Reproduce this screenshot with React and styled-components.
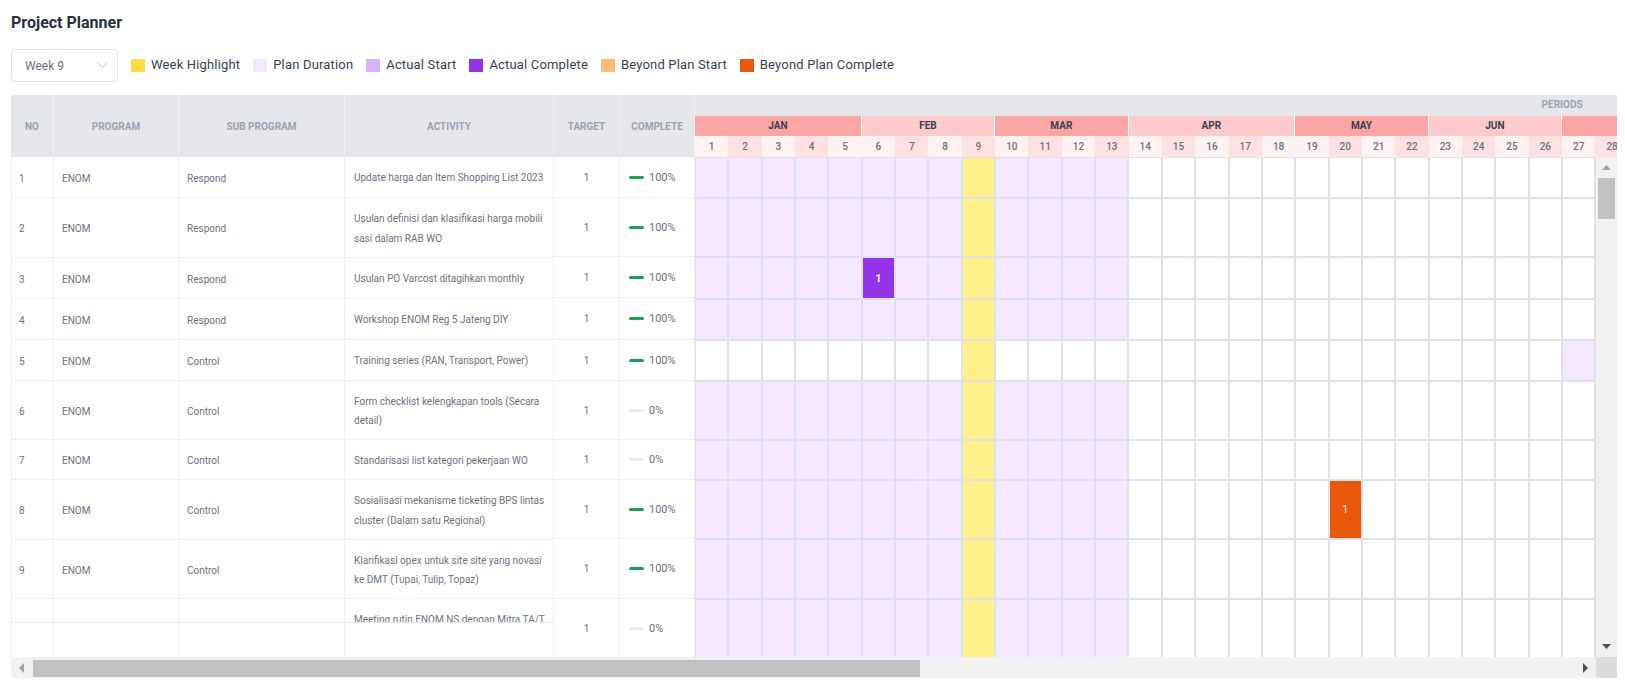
import React from "react";
import styled, { createGlobalStyle } from "styled-components";

const Global = createGlobalStyle`
  html, body { margin: 0; padding: 0; background: #fff; }
  body { font-family: Roboto, "Liberation Sans", sans-serif; overflow: hidden; }
`;

const COL = 33.35;
const LEFT_HEIGHTS = [41, 60, 41, 41, 41, 59, 40, 60, 59];
const METRIC_HEIGHTS = [41, 59, 41, 42, 41, 59, 40, 59, 60, 59];
const GRID_HEIGHTS = [41, 59, 42, 41, 41, 59, 40, 59, 60, 59];
const WIDTHS = { no: 43, program: 125, sub: 166, activity: 209, target: 66, complete: 75 };

const ROWS = [
  { no: 1, sub: "Respond", activity: "Update harga dan Item Shopping List 2023", done: 100 },
  { no: 2, sub: "Respond", activity: "Usulan definisi dan klasifikasi harga mobili\nsasi dalam RAB WO", done: 100 },
  { no: 3, sub: "Respond", activity: "Usulan PO Varcost ditagihkan monthly", done: 100, block: { col: 6, kind: "complete" } },
  { no: 4, sub: "Respond", activity: "Workshop ENOM Reg 5 Jateng DIY", done: 100 },
  { no: 5, sub: "Control", activity: "Training series (RAN, Transport, Power)", done: 100, plan: [27] },
  { no: 6, sub: "Control", activity: "Form checklist kelengkapan tools (Secara\ndetail)", done: 0 },
  { no: 7, sub: "Control", activity: "Standarisasi list kategori pekerjaan WO", done: 0 },
  { no: 8, sub: "Control", activity: "Sosialisasi mekanisme ticketing BPS lintas\ncluster (Dalam satu Regional)", done: 100, block: { col: 20, kind: "beyond" } },
  { no: 9, sub: "Control", activity: "Klarifikasi opex untuk site site yang novasi\nke DMT (Tupai, Tulip, Topaz)", done: 100 },
  { no: 10, sub: "", activity: "Meeting rutin ENOM NS dengan Mitra TA/T", done: 0 },
];

const MONTHS = [
  ["JAN", 5], ["FEB", 4], ["MAR", 4], ["APR", 5], ["MAY", 4], ["JUN", 4],
  ["JUL", 5], ["AUG", 4], ["SEP", 4], ["OCT", 5], ["NOV", 4], ["DEC", 4],
];

const LEGEND = [
  ["#fddc45", "Week Highlight"],
  ["#f3e8ff", "Plan Duration"],
  ["#d8b4fe", "Actual Start"],
  ["#9333ea", "Actual Complete"],
  ["#fdba74", "Beyond Plan Start"],
  ["#ea580c", "Beyond Plan Complete"],
];

const Page = styled.div`
  width: 1606px;
  padding-left: 11px;
`;
const Title = styled.h1`
  margin: 0;
  padding-top: 13px;
  height: 49px;
  box-sizing: border-box;
  font-size: 16px;
  line-height: 20px;
  font-weight: 700;
  color: #27303f;
`;
const Toolbar = styled.div`
  display: flex;
  align-items: center;
  height: 33px;
  margin-bottom: 13px;
`;
const Select = styled.div`
  box-sizing: border-box;
  width: 107px;
  height: 33px;
  margin-right: 13px;
  padding: 0 9px 0 13px;
  display: flex;
  align-items: center;
  justify-content: space-between;
  border: 1px solid #e2e4e9;
  border-radius: 4px;
  font-size: 12px;
  color: #6b7280;
`;
const Legend = styled.div`
  display: flex;
  align-items: center;
  gap: 13px;
`;
const LegendItem = styled.div`
  display: flex;
  align-items: center;
  gap: 6px;
  font-size: 13px;
  letter-spacing: 0.17px;
  color: #374151;
`;
const LegendLabel = styled.span`
  padding-bottom: 2px;
`;
const Swatch = styled.span`
  width: 14px;
  height: 13px;
  background: ${(p) => p.$color};
`;

const Table = styled.div`
  width: 1606px;
`;
const HeaderRow = styled.div`
  display: flex;
  height: 62px;
  background: #e5e7eb;
  overflow: hidden;
`;
const HeadCell = styled.div`
  box-sizing: border-box;
  flex: 0 0 ${(p) => p.$w}px;
  display: flex;
  align-items: center;
  justify-content: center;
  border-right: 1px solid #eef0f2;
  font-size: 10px;
  font-weight: 700;
  color: #9ca3af;
`;
const TimelineHead = styled.div`
  flex: 0 0 ${52 * COL}px;
  display: flex;
  flex-direction: column;
`;
const Periods = styled.div`
  height: 21px;
  line-height: 20px;
  text-align: center;
  font-size: 10px;
  font-weight: 700;
  color: #9ca3af;
`;
const Months = styled.div`
  display: flex;
`;
const Month = styled.div`
  flex: 0 0 ${(p) => p.$span * COL}px;
`;
const MonthLabel = styled.div`
  box-sizing: border-box;
  height: 20px;
  line-height: 20px;
  text-align: center;
  font-size: 10px;
  font-weight: 700;
  color: #374151;
  border-right: 1px solid #fff;
  background: ${(p) => (p.$alt ? "#fecaca" : "#fca5a5")};
`;
const Days = styled.div`
  display: flex;
  height: 21px;
`;
const Day = styled.div`
  flex: 0 0 ${COL}px;
  line-height: 21px;
  text-align: center;
  font-size: 10px;
  font-weight: 500;
  color: #6b7280;
  background: #fef2f2;
  &:nth-child(even) {
    background: #fee2e2;
  }
`;

const Body = styled.div`
  display: flex;
  height: 500px;
  overflow: hidden;
`;
const Pane = styled.div`
  flex: 0 0 ${(p) => p.$w}px;
  overflow: hidden;
`;
const Row = styled.div`
  box-sizing: border-box;
  display: flex;
  height: ${(p) => p.$h}px;
  border-bottom: 1px solid ${(p) => (p.$soft ? "#e9e9f3" : "#eceef1")};
`;
const Cell = styled.div`
  box-sizing: border-box;
  flex: 0 0 ${(p) => p.$w}px;
  display: flex;
  align-items: center;
  padding-top: 2px;
  padding-left: ${(p) => p.$pl}px;
  border-right: 1px solid #eceef1;
  font-size: 10px;
  color: #6b7280;
`;
const NoCell = styled(Cell)`
  border-left: 1px solid #eceef1;
`;
const ActivityText = styled.div`
  line-height: 19.5px;
  white-space: pre-line;
`;
const ClippedCell = styled(Cell)`
  align-items: flex-start;
  padding-top: 11px;
  overflow: hidden;
`;
const TargetCell = styled(Cell)`
  justify-content: center;
  padding: 0;
`;
const CompleteCell = styled(Cell)`
  gap: 5px;
  padding-top: 0;
  font-size: 11px;
`;
const Bar = styled.span`
  width: 15px;
  height: 3px;
  border-radius: 2px;
  background: ${(p) => (p.$done ? "#1e9e52" : "#e8eaee")};
`;

const GridRow = styled.div`
  display: flex;
  height: ${(p) => p.$h}px;
`;
const GridCell = styled.div`
  box-sizing: border-box;
  flex: 0 0 ${COL}px;
  display: flex;
  align-items: center;
  justify-content: center;
  border: 1px solid #dfe1e7;
  background-clip: padding-box;
  background-color: ${(p) => p.$bg};
  font-size: 10px;
  font-weight: ${(p) => p.$weight};
  color: #fff;
`;

const VBar = styled.div`
  flex: 0 0 21px;
  display: flex;
  flex-direction: column;
  background: #f1f1f1;
`;
const VThumb = styled.div`
  height: 41px;
  margin: 0 2px;
  background: #c1c1c1;
`;
const ArrowButton = styled.div`
  flex: 0 0 21px;
  height: 21px;
  display: flex;
  align-items: center;
  justify-content: center;
`;
const Spacer = styled.div`
  flex: 1;
`;
const HBar = styled.div`
  display: flex;
  height: 21px;
  background: #f1f1f1;
`;
const HThumb = styled.div`
  width: 887px;
  height: 17px;
  margin: 3px 0 0 1px;
  background: #c1c1c1;
`;
const Corner = styled.div`
  flex: 0 0 21px;
  background: #dcdcdc;
`;

const Triangle = ({ dir, color }) => {
  const points = {
    up: "0,5 9,5 4.5,0",
    down: "0,0 9,0 4.5,5",
    left: "5,0 5,10 0,5",
    right: "0,0 0,10 5,5",
  }[dir];
  const vertical = dir === "up" || dir === "down";
  return (
    <svg width={vertical ? 9 : 5} height={vertical ? 5 : 10} viewBox={vertical ? "0 0 9 5" : "0 0 5 10"}>
      <polygon points={points} fill={color} />
    </svg>
  );
};

const Chevron = () => (
  <svg width="11" height="7" viewBox="0 0 11 7" fill="none" stroke="#c4c7cd" strokeWidth="1">
    <path d="M1 1l4.5 4.5L10 1" />
  </svg>
);

const cellStyle = (row, col) => {
  const { block, plan } = row;
  if (block && block.col === col) {
    return block.kind === "complete"
      ? { bg: "#9333ea", text: "1", weight: 700 }
      : { bg: "#ea580c", text: "1", weight: 400 };
  }
  if (col === 9) return { bg: "#fef08a", weight: 400 };
  const planned = plan ? plan.includes(col) : col <= 13;
  return { bg: planned ? "#f3e8ff" : "#fff", weight: 400 };
};

let dayCounter = 0;
const monthData = MONTHS.map(([name, span], index) => {
  const days = Array.from({ length: span }, () => ++dayCounter);
  return { name, span, days, alt: index % 2 === 1 };
});
const cols = Array.from({ length: 52 }, (_, i) => i + 1);

export default function App() {
  return (
    <Page>
      <Global />
      <Title>Project Planner</Title>
      <Toolbar>
        <Select>
          Week 9
          <Chevron />
        </Select>
        <Legend>
          {LEGEND.map(([color, label]) => (
            <LegendItem key={label}>
              <Swatch $color={color} />
              <LegendLabel>{label}</LegendLabel>
            </LegendItem>
          ))}
        </Legend>
      </Toolbar>
      <Table>
        <HeaderRow>
          <HeadCell $w={WIDTHS.no}>NO</HeadCell>
          <HeadCell $w={WIDTHS.program}>PROGRAM</HeadCell>
          <HeadCell $w={WIDTHS.sub}>SUB PROGRAM</HeadCell>
          <HeadCell $w={WIDTHS.activity}>ACTIVITY</HeadCell>
          <HeadCell $w={WIDTHS.target}>TARGET</HeadCell>
          <HeadCell $w={WIDTHS.complete}>COMPLETE</HeadCell>
          <TimelineHead>
            <Periods>PERIODS</Periods>
            <Months>
              {monthData.map((m) => (
                <Month key={m.name} $span={m.span}>
                  <MonthLabel $alt={m.alt}>{m.name}</MonthLabel>
                  <Days>
                    {m.days.map((d) => (
                      <Day key={d}>{d}</Day>
                    ))}
                  </Days>
                </Month>
              ))}
            </Months>
          </TimelineHead>
        </HeaderRow>
        <Body>
          <Pane $w={543}>
            {ROWS.slice(0, 9).map((r, i) => (
              <Row key={r.no} $h={LEFT_HEIGHTS[i]}>
                <NoCell $w={WIDTHS.no} $pl={7}>{r.no}</NoCell>
                <Cell $w={WIDTHS.program} $pl={8}>ENOM</Cell>
                <Cell $w={WIDTHS.sub} $pl={8}>{r.sub}</Cell>
                <Cell $w={WIDTHS.activity} $pl={9}>
                  <ActivityText>{r.activity}</ActivityText>
                </Cell>
              </Row>
            ))}
            <Row $h={24} $soft>
              <NoCell $w={WIDTHS.no} $pl={7} />
              <Cell $w={WIDTHS.program} $pl={8} />
              <Cell $w={WIDTHS.sub} $pl={8} />
              <ClippedCell $w={WIDTHS.activity} $pl={9}>
                <ActivityText>{ROWS[9].activity}</ActivityText>
              </ClippedCell>
            </Row>
            <Row $h={36}>
              <NoCell $w={WIDTHS.no} $pl={7} />
              <Cell $w={WIDTHS.program} $pl={8} />
              <Cell $w={WIDTHS.sub} $pl={8} />
              <Cell $w={WIDTHS.activity} $pl={9} />
            </Row>
          </Pane>
          <Pane $w={141}>
            {ROWS.map((r, i) => (
              <Row key={r.no} $h={METRIC_HEIGHTS[i]}>
                <TargetCell $w={WIDTHS.target}>1</TargetCell>
                <CompleteCell $w={WIDTHS.complete} $pl={9}>
                  <Bar $done={r.done > 0} />
                  {r.done}%
                </CompleteCell>
              </Row>
            ))}
          </Pane>
          <Pane $w={901}>
            {ROWS.map((r, i) => (
              <GridRow key={r.no} $h={GRID_HEIGHTS[i]}>
                {cols.map((c) => {
                  const s = cellStyle(r, c);
                  return (
                    <GridCell key={c} $bg={s.bg} $weight={s.weight}>
                      {s.text}
                    </GridCell>
                  );
                })}
              </GridRow>
            ))}
          </Pane>
          <VBar>
            <ArrowButton><Triangle dir="up" color="#a3a3a3" /></ArrowButton>
            <VThumb />
            <Spacer />
            <ArrowButton><Triangle dir="down" color="#505050" /></ArrowButton>
          </VBar>
        </Body>
        <HBar>
          <ArrowButton><Triangle dir="left" color="#a3a3a3" /></ArrowButton>
          <HThumb />
          <Spacer />
          <ArrowButton><Triangle dir="right" color="#505050" /></ArrowButton>
          <Corner />
        </HBar>
      </Table>
    </Page>
  );
}
